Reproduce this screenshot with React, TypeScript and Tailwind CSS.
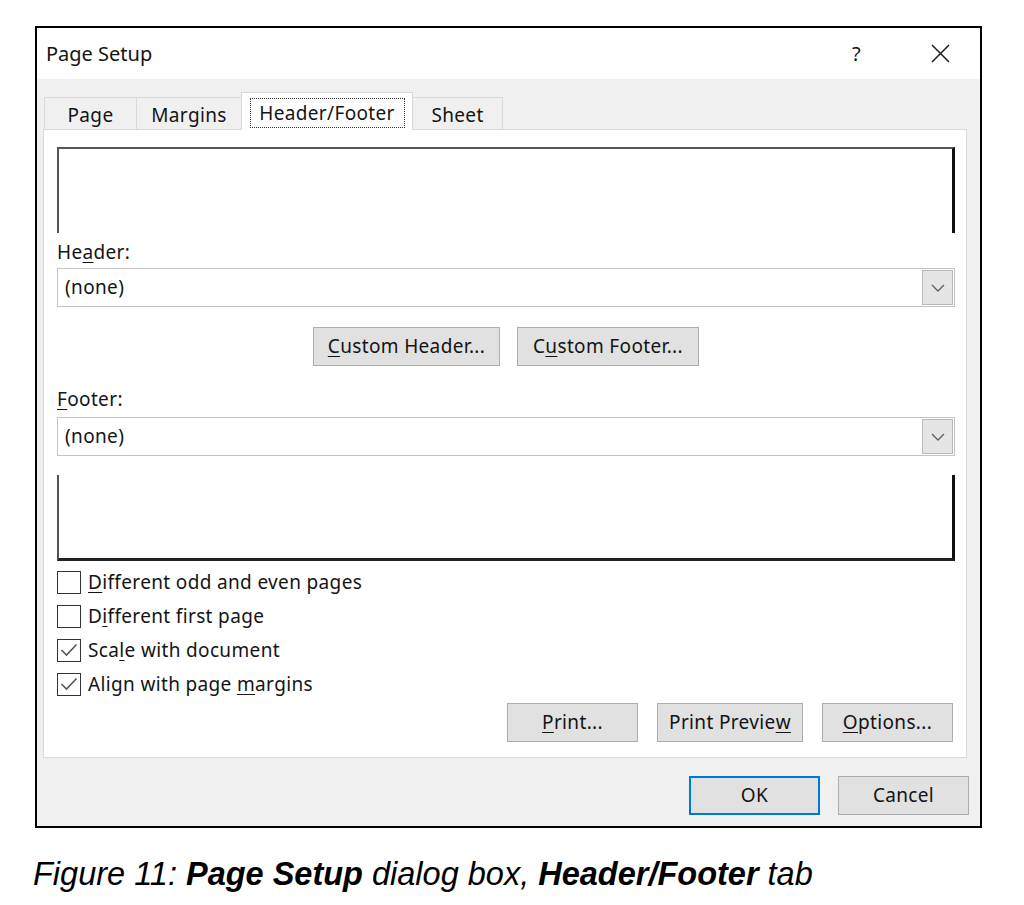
import React from "react";

const tabs = [
  { label: "Page", width: "w-[93px]", active: false },
  { label: "Margins", width: "w-[106px]", active: false },
  { label: "Header/Footer", width: "w-[172px]", active: true },
  { label: "Sheet", width: "w-[91px]", active: false },
];

function U({ children }: { children: React.ReactNode }) {
  return <span className="underline decoration-1 underline-offset-[3px]">{children}</span>;
}

function Btn({ className, children, focused }: { className: string; children: React.ReactNode; focused?: boolean }) {
  return (
    <div
      className={
        "flex h-[39px] items-center justify-center bg-[#e1e1e1] " +
        (focused ? "border-2 border-[#0078d7] " : "border border-[#adadad] ") +
        className
      }
    >
      {children}
    </div>
  );
}

function Select() {
  return (
    <div className="flex h-[39px] items-stretch border border-[#c4c4c4] bg-white">
      <div className="flex flex-1 items-center pl-[7px]">(none)</div>
      <div className="m-px flex w-[31px] items-center justify-center border border-[#b9b9b9] bg-[#e5e5e5]">
        <svg width="14" height="8" viewBox="0 0 14 8" fill="none">
          <path d="M1 1 L7 7 L13 1" stroke="#606060" strokeWidth="1.4" />
        </svg>
      </div>
    </div>
  );
}

function Check({ checked, children }: { checked?: boolean; children: React.ReactNode }) {
  return (
    <div className="flex h-[34px] items-center gap-[7px]">
      <div className="flex h-[23px] w-[24px] items-center justify-center border-[1.5px] border-[#333] bg-white">
        {checked && (
          <svg width="18" height="14" viewBox="0 0 18 14" fill="none">
            <path d="M1.5 7 L6.5 12 L16.5 1.5" stroke="#555" strokeWidth="1.6" />
          </svg>
        )}
      </div>
      <span>{children}</span>
    </div>
  );
}

export default function App() {
  return (
    <div className="min-h-screen bg-white pl-[35px] pt-[26px] text-[#141414]">
      <div className="w-[947px] border-2 border-black bg-[#f0f0f0] font-['Noto_Sans','Open_Sans',sans-serif] text-[19px] tracking-[0.35px]">
        {/* title bar */}
        <div className="flex h-[51px] items-center bg-white pl-[9px] pr-[30px]">
          <span className="flex-1 text-[20px] tracking-normal">Page Setup</span>
          <span className="mr-[70px] text-[20px]">?</span>
          <svg width="19" height="19" viewBox="0 0 19 19" fill="none">
            <path d="M1 1 L18 18 M18 1 L1 18" stroke="#1a1a1a" strokeWidth="1.5" />
          </svg>
        </div>

        {/* tabs */}
        <div className="relative z-10 -mb-px flex h-[51px] items-end pl-[8px]">
          {tabs.map((t) =>
            t.active ? (
              <div
                key={t.label}
                className={"-ml-px flex h-[38px] items-start justify-center border border-b-0 border-[#d9d9d9] bg-white pt-[5px] " + t.width}
              >
                <span className="flex h-[30px] w-[155px] items-center justify-center border border-dotted border-[#333]">
                  {t.label}
                </span>
              </div>
            ) : (
              <div
                key={t.label}
                className={"-ml-px flex h-[33px] items-center justify-center border border-b-0 border-[#d9d9d9] pt-[3px] " + t.width}
              >
                {t.label}
              </div>
            )
          )}
        </div>

        {/* panel */}
        <div className="ml-[6px] h-[629px] w-[924px] border border-[#d9d9d9] bg-white pl-[13px] pr-[11px] pt-[17px]">
          <div className="h-[86px] border-l-2 border-r-[3px] border-t-2 border-l-[#555] border-r-[#111] border-t-[#555]" />
          <div className="flex h-[35px] items-center pt-[3px]">
            He<U>a</U>der:
          </div>
          <Select />
          <div className="mt-[20px] flex justify-center gap-[17px]">
            <Btn className="w-[187px]">
              <U>C</U>ustom Header...
            </Btn>
            <Btn className="w-[182px]">
              C<U>u</U>stom Footer...
            </Btn>
          </div>
          <div className="mt-[13px] flex h-[38px] items-center pt-[2px]">
            <U>F</U>ooter:
          </div>
          <Select />
          <div className="mt-[19px] h-[86px] border-b-[3px] border-l-2 border-r-[3px] border-b-[#222] border-l-[#555] border-r-[#111]" />
          <div className="mt-[4px] flex flex-col">
            <Check>
              <U>D</U>ifferent odd and even pages
            </Check>
            <Check>
              D<U>i</U>fferent first page
            </Check>
            <Check checked>
              Sca<U>l</U>e with document
            </Check>
            <Check checked>
              Align with page <U>m</U>argins
            </Check>
          </div>
          <div className="mt-[2px] flex justify-end gap-[19px] pr-[2px]">
            <Btn className="w-[131px]">
              <U>P</U>rint...
            </Btn>
            <Btn className="w-[146px]">
              Print Previe<U>w</U>
            </Btn>
            <Btn className="w-[131px]">
              <U>O</U>ptions...
            </Btn>
          </div>
        </div>

        {/* OK / Cancel */}
        <div className="flex justify-end gap-[18px] pb-[11px] pr-[11px] pt-[18px]">
          <Btn className="w-[131px]" focused>
            OK
          </Btn>
          <Btn className="w-[131px]">Cancel</Btn>
        </div>
      </div>

      <p className="-ml-[2px] mt-[22px] font-['Liberation_Sans',sans-serif] text-[32.5px] italic text-black">
        Figure 11: <b>Page Setup</b> dialog box, <b>Header/Footer</b> tab
      </p>
    </div>
  );
}
